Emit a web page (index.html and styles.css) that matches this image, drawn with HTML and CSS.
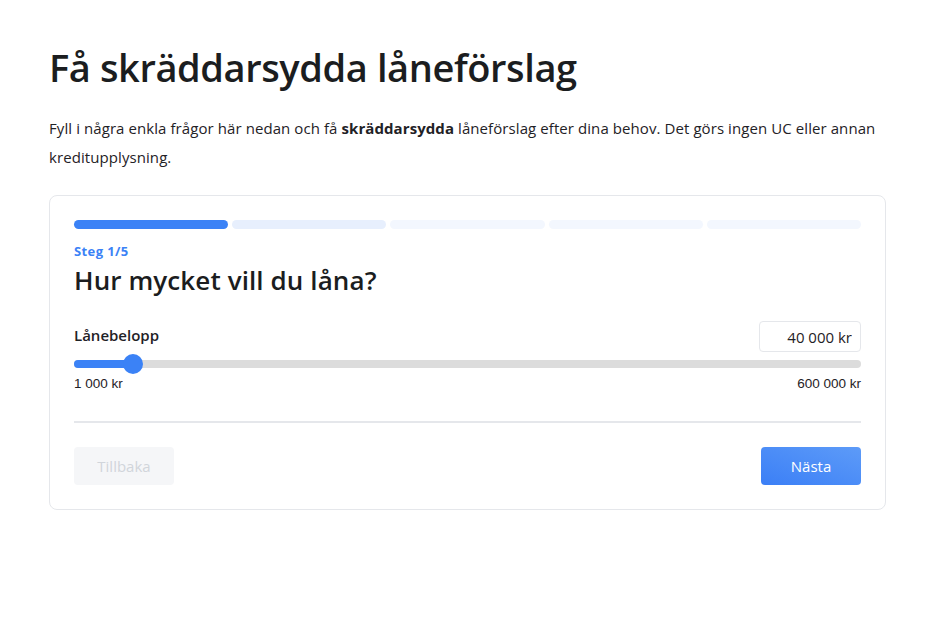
FILE: index.html
```html
<!DOCTYPE html>
<html lang="sv">
<head>
<meta charset="utf-8">
<title>Få skräddarsydda låneförslag</title>
<link rel="stylesheet" href="styles.css">
</head>
<body>
<main class="page">
  <h1 class="title">Få skräddarsydda låneförslag</h1>
  <p class="intro">Fyll i några enkla frågor här nedan och få <strong>skräddarsydda</strong> låneförslag efter dina behov. Det görs ingen UC eller annan kreditupplysning.</p>

  <section class="card">
    <div class="progress">
      <span class="seg seg-active"></span>
      <span class="seg seg-next"></span>
      <span class="seg"></span>
      <span class="seg"></span>
      <span class="seg"></span>
    </div>
    <div class="step">Steg 1/5</div>
    <h2 class="question">Hur mycket vill du låna?</h2>

    <div class="field-head">
      <label class="field-label" for="amount">Lånebelopp</label>
      <input class="amount" id="amount" type="text" value="40 000 kr">
    </div>
    <div class="slider">
      <div class="track"><div class="fill"></div></div>
      <div class="thumb"></div>
    </div>
    <div class="range-labels">
      <span>1 000 kr</span>
      <span>600 000 kr</span>
    </div>

    <div class="actions">
      <button class="btn btn-back" type="button" disabled>Tillbaka</button>
      <button class="btn btn-next" type="button">Nästa</button>
    </div>
  </section>
</main>
</body>
</html>
```

FILE: styles.css
```css
* { box-sizing: border-box; }

body {
  margin: 0;
  background: #ffffff;
  color: #1f2226;
  font-family: "Open Sans", "Noto Sans", sans-serif;
}

.page {
  width: 837px;
  margin-left: 49px;
  padding-top: 43px;
}

.title {
  margin: 0;
  font-size: 38px;
  line-height: 48px;
  font-weight: 600;
  color: #1b1d20;
  letter-spacing: -0.4px;
}

.intro {
  margin: 23px 0 0;
  font-size: 15px;
  line-height: 29px;
  letter-spacing: 0.08px;
  color: #1f2226;
}

.intro strong { font-weight: 700; }

.card {
  margin-top: 23px;
  border: 1px solid #e5e7eb;
  border-radius: 8px;
  padding: 24px;
}

.progress {
  display: flex;
  gap: 4px;
}

.seg {
  flex: 1;
  height: 9px;
  border-radius: 5px;
  background: #f3f7fe;
}

.seg-active { background: #3b82f6; }
.seg-next { background: #e7effd; }

.step {
  margin-top: 14px;
  font-size: 13px;
  font-weight: 700;
  letter-spacing: 0.4px;
  color: #3b82f6;
  line-height: 16px;
}

.question {
  margin: 5px 0 0;
  font-size: 26px;
  line-height: 32px;
  font-weight: 600;
  color: #1b1d20;
  letter-spacing: 0.1px;
}

.field-head {
  margin-top: 25px;
  display: flex;
  justify-content: space-between;
  align-items: flex-end;
}

.field-label {
  font-size: 15px;
  font-weight: 600;
  line-height: 20px;
  padding-bottom: 7px;
}

.amount {
  width: 102px;
  height: 31px;
  border: 1px solid #e5e7eb;
  border-radius: 4px;
  padding: 0 8px;
  text-align: right;
  font-family: "Open Sans", "Noto Sans", sans-serif;
  font-size: 15px;
  color: #1f2226;
  background: #fff;
}

.slider {
  position: relative;
  margin-top: 2px;
  height: 20px;
  display: flex;
  align-items: center;
}

.track {
  width: 100%;
  height: 8px;
  border-radius: 4px;
  background: #dcdcdc;
  overflow: hidden;
}

.fill {
  width: 59px;
  height: 100%;
  background: #3b82f6;
}

.thumb {
  position: absolute;
  left: 49px;
  top: 0;
  width: 20px;
  height: 20px;
  border-radius: 50%;
  background: #3b82f6;
}

.range-labels {
  display: flex;
  justify-content: space-between;
  margin-top: 1px;
  font-family: "Liberation Sans", Arial, sans-serif;
  font-size: 13.5px;
  line-height: 18px;
  color: #1f2226;
  padding-bottom: 28px;
  border-bottom: 2px solid #e5e7eb;
}

.actions {
  margin-top: 24px;
  display: flex;
  justify-content: space-between;
}

.btn {
  width: 100px;
  height: 38px;
  border: none;
  border-radius: 4px;
  font-family: "Open Sans", "Noto Sans", sans-serif;
  font-size: 15px;
}

.btn-back {
  background: #f5f6f8;
  color: #d1d5db;
}

.btn-next {
  background: linear-gradient(to top right, #3b7ff6, #5d9bf8);
  color: #ffffff;
}
```
